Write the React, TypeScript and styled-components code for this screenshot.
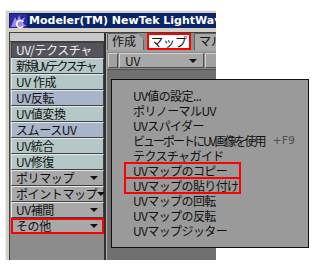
import React from 'react';
import styled, { createGlobalStyle } from 'styled-components';

const GlobalStyle = createGlobalStyle`
  html, body {
    margin: 0;
    padding: 0;
    background: #ffffff;
  }
  body {
    width: 312px;
    height: 268px;
    overflow: hidden;
    font-family: "Noto Sans CJK JP", "DejaVu Sans", sans-serif;
  }
`;

const Page = styled.div`
  position: relative;
  width: 312px;
  height: 268px;
  padding: 10px 0 0 5px;
  box-sizing: border-box;
`;

const Window = styled.div`
  width: 211px;
  height: 250px;
  box-sizing: border-box;
  background: #d4d0c8;
  border-top: 1px solid #f0f0f0;
  border-left: 1px solid #f0f0f0;
  padding: 2px 0 0 3px;
  display: flex;
  flex-direction: column;
  overflow: hidden;
`;

const TitleBar = styled.div`
  height: 15px;
  background: #0a246a;
  display: flex;
  align-items: center;
  gap: 2px;
  padding-left: 1px;
  flex-shrink: 0;
  overflow: hidden;
`;

const LogoBox = styled.span`
  flex-shrink: 0;
  display: flex;
`;

const TitleText = styled.span`
  color: #ffffff;
  font-family: "DejaVu Sans", "Liberation Sans", sans-serif;
  font-weight: bold;
  font-size: 11px;
  white-space: nowrap;
`;

const Body = styled.div`
  flex: 1;
  display: flex;
  margin-top: 4px;
  border-top: 1px solid #404040;
  border-left: 1px solid #404040;
  min-height: 0;
`;

const SidePanel = styled.div`
  width: 94px;
  display: flex;
  flex-direction: column;
  background: #8c8c8c;
  border-right: 2px solid #303030;
`;

const SideTop = styled.div`
  height: 8px;
  background: #c8c8c8;
  border-bottom: 1px solid #404040;
`;

type Tone = 'head' | 'teal' | 'blue' | 'gray';

const toneBg: Record<Tone, string> = {
  head: '#54545c',
  teal: '#b4c8c8',
  blue: '#a8b4c8',
  gray: '#a8a8a8',
};

const SideItem = styled.div<{ $tone: Tone; $marked?: boolean; $tight?: boolean }>`
  height: 16px;
  box-sizing: border-box;
  display: flex;
  align-items: center;
  justify-content: space-between;
  padding: 0 5px 0 4px;
  margin-left: 1px;
  background: ${(p) => toneBg[p.$tone]};
  color: ${(p) => (p.$tone === 'head' ? '#f0f0f0' : '#101010')};
  font-size: 12px;
  line-height: 14px;
  letter-spacing: ${(p) => (p.$tight ? '-2.2px' : '-0.4px')};
  white-space: nowrap;
  border: 1px solid #404040;
  border-top-color: ${(p) => (p.$tone === 'head' ? '#404040' : '#e8e8e8')};
  border-left-color: ${(p) => (p.$tone === 'head' ? '#404040' : '#e8e8e8')};
  outline: ${(p) => (p.$marked ? '2px solid #ff0000' : 'none')};
  outline-offset: -2px;
`;

const Arrow = styled.span`
  flex-shrink: 0;
  width: 0;
  height: 0;
  border-left: 4px solid transparent;
  border-right: 4px solid transparent;
  border-top: 4px solid #101010;
`;

const Main = styled.div`
  flex: 1;
  display: flex;
  flex-direction: column;
  background: #707070;
  border-left: 1px solid #b0b0b0;
`;

const TabStrip = styled.div`
  height: 17px;
  display: flex;
  align-items: flex-end;
  gap: 3px;
  background: #8c8c8c;
  border-bottom: 2px solid #a0a0a0;
`;

const Tab = styled.div<{ $active?: boolean }>`
  flex-shrink: 0;
  height: 17px;
  box-sizing: border-box;
  padding: ${(p) => (p.$active ? '0 2px' : '0 7px 0 4px')};
  font-size: 12px;
  line-height: 14px;
  white-space: nowrap;
  background: ${(p) => (p.$active ? '#ffffff' : '#a8a8a8')};
  color: #101010;
  border: ${(p) => (p.$active ? '2px solid #ff0000' : '1px solid #606060')};
  border-bottom: ${(p) => (p.$active ? '2px solid #ff0000' : 'none')};
  clip-path: ${(p) =>
    p.$active ? 'none' : 'polygon(0 0, calc(100% - 7px) 0, 100% 7px, 100% 100%, 0 100%)'};
`;

const ToolRow = styled.div`
  height: 16px;
  display: flex;
  gap: 1px;
  padding: 1px 0 0 1px;
  background: #8c8c8c;
  border-bottom: 1px solid #505050;
`;

const Knob = styled.div<{ $w: number }>`
  flex-shrink: 0;
  width: ${(p) => p.$w}px;
  height: 15px;
  box-sizing: border-box;
  background: #a0a0a0;
  border: 1px solid #505050;
  border-top-color: #d0d0d0;
  border-left-color: #d0d0d0;
`;

const Dropdown = styled.div`
  flex-shrink: 0;
  width: 85px;
  height: 15px;
  box-sizing: border-box;
  background: #a8a8a8;
  border: 1px solid #505050;
  border-top-color: #d0d0d0;
  border-left-color: #d0d0d0;
  display: flex;
  align-items: center;
  justify-content: space-between;
  padding: 0 6px 0 5px;
  font-size: 12px;
  line-height: 13px;
  color: #101010;
`;

const Menu = styled.div`
  position: absolute;
  left: 111px;
  top: 79px;
  width: 198px;
  height: 169px;
  box-sizing: border-box;
  background: #9a9a9a;
  border: 1px solid #101010;
  padding: 8px 0 0 13px;
  display: flex;
  flex-direction: column;
  align-items: flex-start;
`;

const MenuItem = styled.div<{ $marked?: boolean; $tight?: boolean }>`
  height: 15px;
  min-width: 115px;
  box-sizing: border-box;
  display: flex;
  align-items: center;
  gap: 8px;
  padding-left: 8px;
  font-size: 12px;
  line-height: 13px;
  letter-spacing: ${(p) => (p.$tight ? '-2px' : '-0.6px')};
  color: #101010;
  white-space: nowrap;
  outline: ${(p) => (p.$marked ? '2px solid #ff0000' : 'none')};
  outline-offset: -1px;
`;

const Shortcut = styled.span`
  color: #505050;
  font-family: "DejaVu Sans", sans-serif;
  font-size: 11px;
  letter-spacing: 0;
`;

const sideItems: { label: string; tone: Tone; arrow?: boolean; marked?: boolean; tight?: boolean }[] = [
  { label: 'UV/テクスチャ', tone: 'head' },
  { label: '新規UVテクスチャ', tone: 'teal', tight: true },
  { label: 'UV 作成', tone: 'teal' },
  { label: 'UV反転', tone: 'blue' },
  { label: 'UV値変換', tone: 'teal' },
  { label: 'スムースUV', tone: 'blue' },
  { label: 'UV統合', tone: 'teal' },
  { label: 'UV修復', tone: 'teal' },
  { label: 'ポリマップ', tone: 'gray', arrow: true },
  { label: 'ポイントマップ', tone: 'gray', arrow: true },
  { label: 'UV補間', tone: 'gray', arrow: true },
  { label: 'その他', tone: 'gray', arrow: true, marked: true },
];

const menuItems: { label: string; shortcut?: string; marked?: boolean; tight?: boolean }[] = [
  { label: 'UV値の設定...' },
  { label: 'ポリノーマルUV' },
  { label: 'UVスパイダー' },
  { label: 'ビューポートにUV画像を使用', shortcut: '+F9', tight: true },
  { label: 'テクスチャガイド' },
  { label: 'UVマップのコピー', marked: true },
  { label: 'UVマップの貼り付け', marked: true },
  { label: 'UVマップの回転' },
  { label: 'UVマップの反転' },
  { label: 'UVマップジッター' },
];

function Logo() {
  return (
    <svg width="17" height="14" viewBox="0 0 17 14">
      <rect width="17" height="14" fill="#2c2c9c" />
      <path d="M1 13 L5 3 L7 7 L9 1 L11 6 L15 3 L13 9 L16 12 Z" fill="#9c8cf0" />
      <path d="M13 8 A3.5 3.5 0 1 0 13 12" fill="none" stroke="#ffffff" strokeWidth="1.6" />
    </svg>
  );
}

export default function App() {
  return (
    <Page>
      <GlobalStyle />
      <Window>
        <TitleBar>
          <LogoBox>
            <Logo />
          </LogoBox>
          <TitleText>Modeler(TM) NewTek LightWave</TitleText>
        </TitleBar>
        <Body>
          <SidePanel>
            <SideTop />
            {sideItems.map((it) => (
              <SideItem key={it.label} $tone={it.tone} $marked={it.marked} $tight={it.tight}>
                <span>{it.label}</span>
                {it.arrow && <Arrow />}
              </SideItem>
            ))}
          </SidePanel>
          <Main>
            <TabStrip>
              <Tab>作成</Tab>
              <Tab $active>マップ</Tab>
              <Tab>マルチ</Tab>
            </TabStrip>
            <ToolRow>
              <Knob $w={10} />
              <Dropdown>
                <span>UV</span>
                <Arrow />
              </Dropdown>
              <Knob $w={14} />
            </ToolRow>
          </Main>
        </Body>
      </Window>
      <Menu>
        {menuItems.map((it) => (
          <MenuItem key={it.label} $marked={it.marked} $tight={it.tight}>
            <span>{it.label}</span>
            {it.shortcut && <Shortcut>{it.shortcut}</Shortcut>}
          </MenuItem>
        ))}
      </Menu>
    </Page>
  );
}
